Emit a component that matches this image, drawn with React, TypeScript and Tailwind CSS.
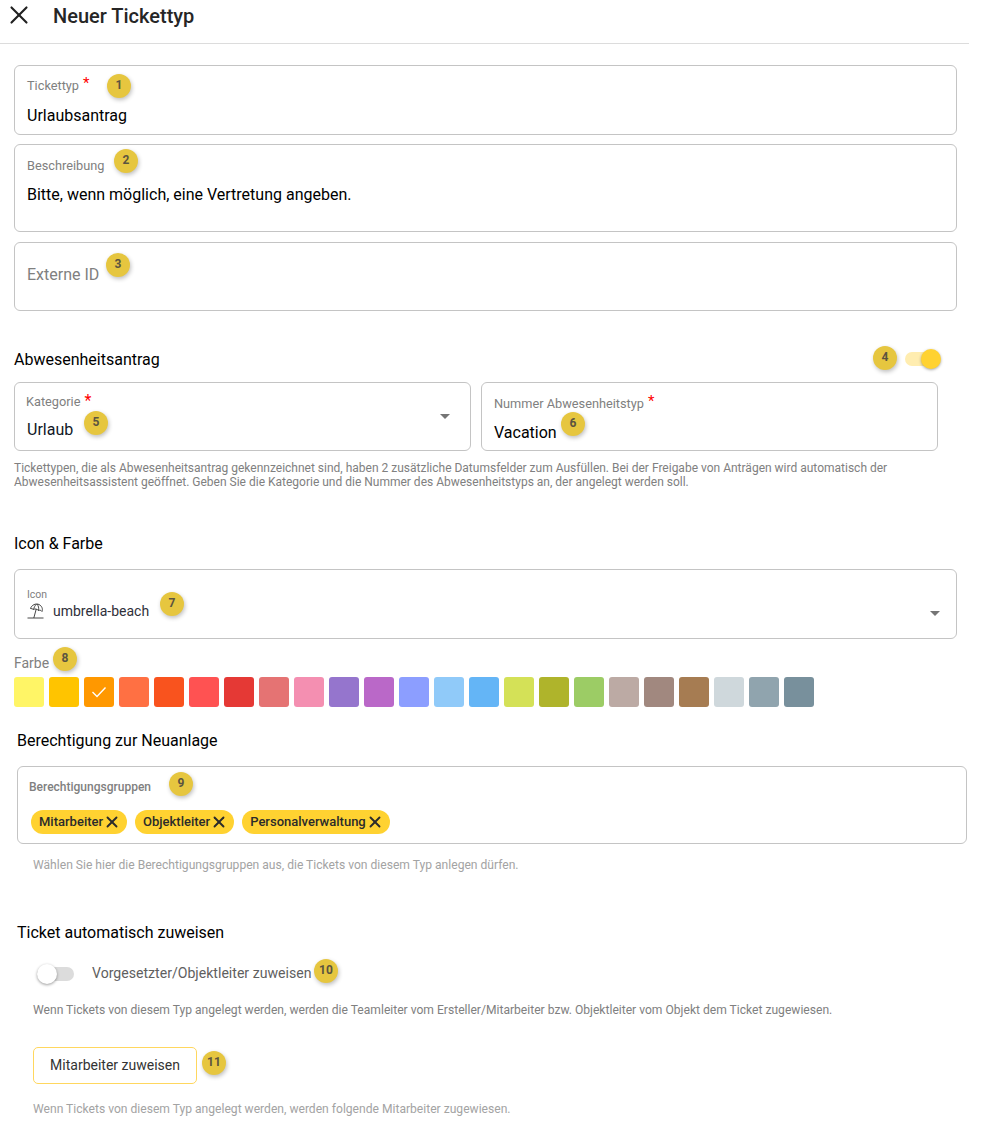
import { X } from "lucide-react";

const swatches = [
  "bg-[#fff566]", "bg-[#ffc400]", "bg-[#ff9800]", "bg-[#ff7043]", "bg-[#f9531e]", "bg-[#ff5252]",
  "bg-[#e53935]", "bg-[#e57373]", "bg-[#f48fb1]", "bg-[#9575cd]", "bg-[#ba68c8]", "bg-[#8c9eff]",
  "bg-[#90caf9]", "bg-[#64b5f6]", "bg-[#d4e157]", "bg-[#afb42b]", "bg-[#9ccc65]", "bg-[#bcaaa4]",
  "bg-[#a1887f]", "bg-[#a67c52]", "bg-[#cfd8dc]", "bg-[#90a4ae]", "bg-[#78909c]",
];

// numbered marker that sits on top of the form
function Marker({ n, className }: { n: number; className: string }) {
  return (
    <span
      className={
        "absolute flex h-6 w-6 items-center justify-center rounded-full bg-[#e6c63f] pb-0.5 text-[12px] font-bold text-[#5b5440] shadow-[1px_2px_4px_rgba(0,0,0,0.25)] " +
        className
      }
    >
      {n}
    </span>
  );
}

function Caret() {
  return <span className="block h-0 w-0 border-x-[5px] border-t-[5px] border-x-transparent border-t-[#757575]" />;
}

function Chip({ label }: { label: string }) {
  return (
    <span className="flex h-6 items-center rounded-full bg-[#ffd231] pl-2 pr-[6px] text-[13px] font-medium text-[#2b2b2b]">
      {label}
      <X size={18} strokeWidth={2.5} />
    </span>
  );
}

export default function App() {
  return (
    <div className="relative h-[1135px] w-[987px] overflow-hidden bg-white font-['Roboto',sans-serif] text-black">
      <header className="flex h-11 w-[969px] items-start border-b border-[#dcdcdc] pl-[4px]">
        <X size={30} strokeWidth={1.7} className="text-[#212121]" />
        <h1 className="ml-[19px] mt-[5px] text-[20px] font-medium leading-[22px] text-[#262626]">Neuer Tickettyp</h1>
      </header>

      <div className="pl-[14px] pt-[21px]">
        <div className="relative h-[70px] w-[943px] rounded-md border border-[#c4c4c4] pl-3 pt-[12px]">
          <div className="flex text-[12.75px] leading-4 text-[#808080]">
            Tickettyp<span className="ml-1 mt-[-3px] text-[15px] text-[#ff0000]">*</span>
          </div>
          <div className="mt-[12px] text-[16px] leading-5">Urlaubsantrag</div>
          <Marker n={1} className="left-[92px] top-[8px]" />
        </div>

        <div className="relative mt-[9px] h-[88px] w-[943px] rounded-md border border-[#c4c4c4] pl-3 pt-[13px]">
          <div className="text-[12.75px] leading-4 text-[#808080]">Beschreibung</div>
          <div className="mt-[11px] text-[16px] leading-5">Bitte, wenn möglich, eine Vertretung angeben.</div>
          <Marker n={2} className="left-[99px] top-[4px]" />
        </div>

        <div className="relative mt-[10px] h-[69px] w-[943px] rounded-md border border-[#c4c4c4] pl-3 pt-[22px]">
          <div className="text-[16px] leading-5 text-[#808080]">Externe ID</div>
          <Marker n={3} className="left-[91px] top-[10px]" />
        </div>

        <div className="relative mt-[39px] h-[20px] w-[943px]">
          <h2 className="text-[16px] leading-5">Abwesenheitsantrag</h2>
          <Marker n={4} className="left-[859px] top-[-4px]" />
          <span className="absolute left-[891px] top-[2px] h-[14px] w-[30px] rounded-full bg-[#ffedb0]" />
          <span className="absolute left-[907px] top-[-1px] h-5 w-5 rounded-full bg-[#ffd231] shadow-[0_1px_3px_rgba(0,0,0,0.35)]" />
        </div>

        <div className="mt-[12px] flex w-[924px] gap-[10px]">
          <div className="relative flex h-[69px] w-[457px] items-start justify-between rounded-md border border-[#c4c4c4] pl-[11px] pr-[20px] pt-[11px]">
            <div>
              <div className="flex text-[12.75px] leading-4 text-[#808080]">
                Kategorie<span className="ml-[4px] mt-[-1px] text-[16px] text-[#ff0000]">*</span>
              </div>
              <div className="mt-[10px] ml-[1px] text-[16px] leading-5 text-[#111827]">Urlaub</div>
            </div>
            <span className="mt-[20px]"><Caret /></span>
            <Marker n={5} className="left-[69px] top-[28px]" />
          </div>
          <div className="relative h-[69px] w-[457px] rounded-md border border-[#c4c4c4] pl-3 pt-[13px]">
            <div className="flex text-[12.75px] leading-4 text-[#808080]">
              Nummer Abwesenheitstyp<span className="ml-1 mt-[-3px] text-[15px] text-[#ff0000]">*</span>
            </div>
            <div className="mt-[11px] text-[16px] leading-5">Vacation</div>
            <Marker n={6} className="left-[79px] top-[29px]" />
          </div>
        </div>

        <p className="mt-[10px] w-[920px] text-[12px] leading-[14px] text-[#808080]">
          Tickettypen, die als Abwesenheitsantrag gekennzeichnet sind, haben 2 zusätzliche Datumsfelder zum Ausfüllen. Bei der Freigabe von Anträgen wird automatisch der Abwesenheitsassistent geöffnet. Geben Sie die Kategorie und die Nummer des Abwesenheitstyps an, der angelegt werden soll.
        </p>

        <h2 className="mt-[45px] text-[16px] leading-5">Icon &amp; Farbe</h2>

        <div className="relative mt-[15px] flex h-[70px] w-[943px] items-start justify-between rounded-md border border-[#c4c4c4] pl-3 pr-[16px] pt-[19px]">
          <div>
            <div className="text-[10.5px] leading-3 text-[#808080]">Icon</div>
            <div className="flex items-center gap-[9px] text-[14px] leading-5 text-[#2f2f3a]">
              <svg width="17" height="16" viewBox="0 0 17 16" fill="none" stroke="#333" strokeWidth="0.9">
                <path d="M0.5 15 H16.5" />
                <path d="M3.5 5.5 C4.5 2 9 0 12 1.5 C15 3 16 6 15 8.5 C14 7 12.5 7 11.5 7.5 C10 6 8 5.5 6.5 6.5 C5.5 5.8 4.5 5.5 3.5 5.5 Z" />
                <path d="M9.5 1 C8 2.5 7 4.5 6.5 6.5 M10 1 C11.5 3 12 5 11.5 7.5 M9.2 6.2 L6.8 15" />
              </svg>
              umbrella-beach
            </div>
          </div>
          <span className="mt-[22px]"><Caret /></span>
          <Marker n={7} className="left-[145px] top-[22px]" />
        </div>

        <div className="relative mt-[15px] text-[14px] leading-[18px] text-[#808080]">
          Farbe
          <Marker n={8} className="left-[39px] top-[-7px]" />
        </div>

        <div className="mt-[5px] flex gap-[5px]">
          {swatches.map((c, i) => (
            <span key={c} className={"flex h-[30px] w-[30px] items-center justify-center rounded-[3px] " + c}>
              {i === 2 && (
                <svg width="16" height="12" viewBox="0 0 16 12" fill="none" stroke="#fff" strokeWidth="1.4">
                  <path d="M1.5 6 L6 10.5 L14.5 1.5" />
                </svg>
              )}
            </span>
          ))}
        </div>
      </div>

      <div className="pl-[17px]">
        <h2 className="mt-[24px] text-[16px] leading-5">Berechtigung zur Neuanlage</h2>

        <div className="relative mt-[15px] h-[78px] w-[950px] rounded-md border border-[#c4c4c4] pl-[11px] pt-[12px]">
          <div className="text-[12px] font-medium leading-4 text-[#808080]">Berechtigungsgruppen</div>
          <div className="ml-[2px] mt-[15px] flex gap-2">
            <Chip label="Mitarbeiter" />
            <Chip label="Objektleiter" />
            <Chip label="Personalverwaltung" />
          </div>
          <Marker n={9} className="left-[151px] top-[5px]" />
        </div>

        <p className="ml-4 mt-[13px] text-[12.1px] leading-4 text-[#a3a3a3]">
          Wählen Sie hier die Berechtigungsgruppen aus, die Tickets von diesem Typ anlegen dürfen.
        </p>

        <h2 className="mt-[50px] text-[16px] leading-5">Ticket automatisch zuweisen</h2>

        <div className="relative ml-[20px] mt-[21px] flex h-5 items-center text-[14.1px] text-[#5f5f5f]">
          <span className="relative mr-[18px] h-[14px] w-[37px] rounded-full bg-[#dcdcdc]">
            <span className="absolute left-0 top-[-3px] h-5 w-5 rounded-full bg-white shadow-[0_1px_3px_rgba(0,0,0,0.4)]" />
          </span>
          Vorgesetzter/Objektleiter zuweisen
          <Marker n={10} className="left-[277px] top-[-5px]" />
        </div>

        <p className="ml-4 mt-[18px] text-[12.1px] leading-4 text-[#808080]">
          Wenn Tickets von diesem Typ angelegt werden, werden die Teamleiter vom Ersteller/Mitarbeiter bzw. Objektleiter vom Objekt dem Ticket zugewiesen.
        </p>

        <div className="relative ml-4 mt-[29px] flex">
          <button className="h-[37px] w-[164px] rounded-[5px] border border-[#ffd75e] bg-white text-[14px] font-normal text-[#333]">
            Mitarbeiter zuweisen
          </button>
          <Marker n={11} className="left-[169px] top-[4px]" />
        </div>

        <p className="ml-4 mt-[17px] text-[12.1px] leading-4 text-[#a3a3a3]">
          Wenn Tickets von diesem Typ angelegt werden, werden folgende Mitarbeiter zugewiesen.
        </p>
      </div>
    </div>
  );
}
